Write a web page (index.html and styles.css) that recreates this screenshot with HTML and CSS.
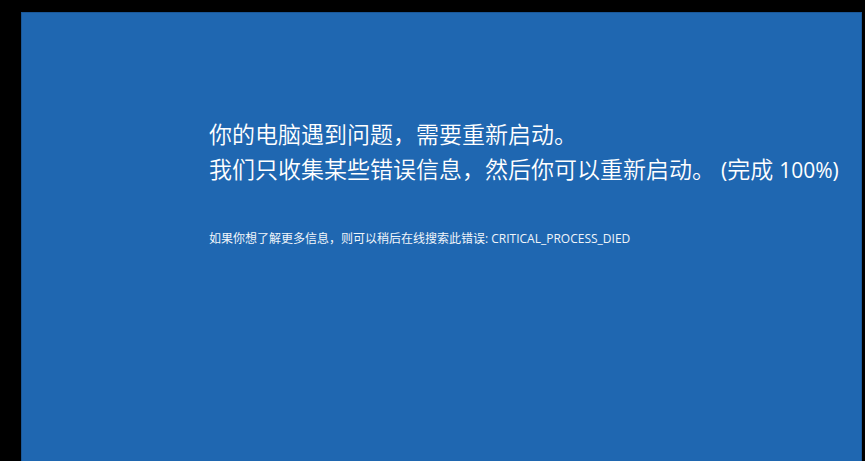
FILE: index.html
```html
<!DOCTYPE html>
<html lang="zh-CN">
<head>
<meta charset="utf-8">
<title>CRITICAL_PROCESS_DIED</title>
<link rel="stylesheet" href="styles.css">
</head>
<body>
<main class="screen">
  <h1 class="message">你的电脑遇到问题，需要重新启动。<br>我们只收集某些错误信息，然后你可以重新启动。 <span class="latin">(</span>完成 <span class="latin">100%)</span></h1>
  <p class="detail">如果你想了解更多信息，则可以稍后在线搜索此错误: CRITICAL_PROCESS_DIED</p>
</main>
</body>
</html>
```

FILE: styles.css
```css
* {
  box-sizing: border-box;
}

body {
  margin: 0;
  min-height: 100vh;
  display: flex;
  padding: 12px 3px 0 21px;
  background: #000;
}

.screen {
  flex: 1;
  padding: 104px 0 0 187px;
  border: 1px solid #1a5797;
  border-bottom: 0;
  background: #1f67b1;
  color: #fff;
  font-family: "Open Sans", "Noto Sans CJK SC", sans-serif;
  white-space: nowrap;
}

.message {
  margin: 0;
  font-size: 23px;
  font-weight: 350;
  line-height: 35px;
}

.latin {
  font-size: 21px;
  font-weight: 400;
}

.detail {
  margin: 42px 0 0;
  color: #f0f5fa;
  font-size: 12px;
  line-height: 18px;
}
```
